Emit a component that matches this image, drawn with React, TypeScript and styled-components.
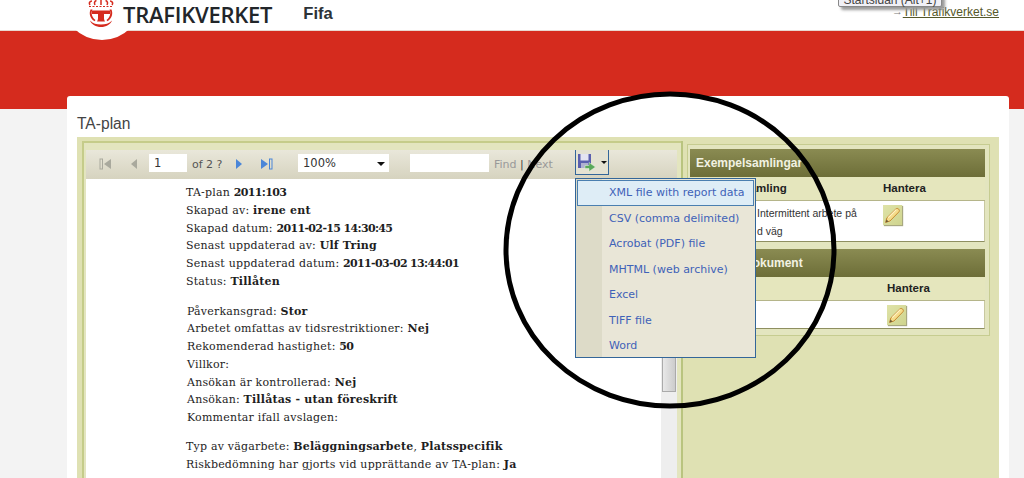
import React from "react";
import styled, { createGlobalStyle } from "styled-components";

const Global = createGlobalStyle`
  html, body { margin: 0; padding: 0; height: 478px; overflow: hidden; background: #f3f3f3; }
  #root { height: 478px; overflow: hidden; position: relative; }
`;
const Page = styled.div`position: relative; width: 1024px; height: 478px; overflow: hidden; font-family: "Liberation Sans", Arial, sans-serif;`;
const Header = styled.header`position: relative; height: 30px; background: #fff; border-bottom: 1px solid #e8d8d0; display: flex; align-items: center; padding-left: 123px;`;
const LogoBadge = styled.div`position: absolute; left: 62px; top: -40px; width: 80px; height: 80px; border-radius: 50%; background: #fff; z-index: 1;`;
const LogoMark = styled.svg`position: absolute; left: 87px; top: 0; width: 28px; height: 28px; z-index: 2;`;
const Brand = styled.span`position: relative; z-index: 2; flex: none; font: 600 22px "Open Sans", sans-serif; color: #22262a; margin-right: 31px; letter-spacing: -0.25px; margin-top: -3px; white-space: nowrap;`;
const AppName = styled.span`font: 700 16.6px "Liberation Sans", sans-serif; color: #2c3338; margin-top: -3px;`;
const TopLink = styled.a`margin-left: auto; margin-right: 25px; margin-top: -6px; font-size: 12px; color: #55582a; text-decoration: underline;`;
const LinkArrow = styled.span`font-size: 11px; color: #777; position: absolute; left: 892px; top: 5px;`;
const Tip = styled.div`position: absolute; left: 838px; top: -6px; width: 104px; height: 13px; background: #f0f0f6; border: 1px solid #888; border-radius: 2px; box-shadow: 3px 3px 3px #999; font-size: 12px; line-height: 11px; color: #444; text-align: center; z-index: 3; box-sizing: border-box;`;
const RedBand = styled.div`height: 78px; background: #d52b1e;`;
const Sheet = styled.main`margin: -13px 15px 0 67px; height: 400px; background: #fff; border-radius: 3px 3px 0 0; padding: 10px 10px 0; box-sizing: border-box;`;
const Title = styled.h1`margin: 0; height: 31px; font: 400 15.6px/36px "Liberation Sans", sans-serif; color: #444;`;
const Frame = styled.div`display: flex; height: 360px; background: #dfe1b3; padding: 4px 9px 0 5px; box-sizing: border-box;`;
const LeftPane = styled.section`width: 599px; flex: none; border-left: 2px solid #c5cc8a; border-top: 2px solid #c5cc8a; padding: 7px 4px 0 2px; background: #e3e5bf; box-sizing: border-box;`;
const Toolbar = styled.div`height: 29px; background: linear-gradient(#e9e7da, #d6d3bf); display: flex; align-items: center; color: #666; font-size: 11.5px; position: relative;`;
const NavIcon = styled.svg<{ $x: number }>`width: 14px; height: 14px; flex: none; margin-left: ${p => p.$x}px; margin-top: -2px;`;
const PageInput = styled.div`width: 38px; height: 18px; margin-left: 9px; background: #fff; font: 11.5px/18px "DejaVu Sans", sans-serif; color: #333; text-indent: 5px; flex: none; margin-top: -3px;`;
const PageCount = styled.span`margin-left: 5px; width: 28px; font: 11px "DejaVu Sans", sans-serif; flex: none; color: #555; white-space: nowrap; margin-top: -1px;`;
const Zoom = styled.div`width: 91px; height: 18px; margin-left: 25px; flex: none; background: #fff; font: 11.5px/18px "DejaVu Sans", sans-serif; color: #333; text-indent: 5px; position: relative; margin-top: -3px;`;
const Caret = styled.i`position: absolute; border-style: solid; border-width: 4px 4px 0; border-color: #111 transparent transparent; right: 4px; top: 8px;`;
const FindInput = styled.div`width: 79px; height: 18px; margin-left: 21px; background: #fff; flex: none; margin-top: -3px;`;
const FindLinks = styled.span`margin-left: 5px; font: 11px "DejaVu Sans", sans-serif; color: #999; white-space: nowrap; margin-top: -1px;`;
const Sep = styled.span`color: #444;`;
const ExportBtn = styled.div`position: absolute; left: 489px; top: 0; border: 1px solid #336699; border-top: none; background: #e4e2d2; display: flex; align-items: center; padding-left: 1px; box-sizing: border-box; width: 34px; height: 25px;`;
const BtnCaret = styled.i`border-style: solid; border-width: 3px 3px 0; border-color: #111 transparent transparent; margin-left: 4px;`;
const Report = styled.div`height: 320px; background: #fff; position: relative; padding: 5px 0 0 100px; box-sizing: border-box; font: 11px/17.75px "DejaVu Serif", serif; color: #1e1e1e;`;
const Block = styled.p<{ $i?: number; $mb?: number }>`margin: 0 0 ${p => p.$mb ?? 12}px ${p => p.$i ?? 0}px; white-space: nowrap; letter-spacing: 0.2px;`;
const Line = styled.span`display: block;`;
const Num = styled.b`letter-spacing: -0.65px;`;
const Track = styled.div`position: absolute; right: 0; top: 0; bottom: 0; width: 16px; background: #eee;`;
const Thumb = styled.div`position: absolute; left: 1px; top: 0; border: 1px solid #aaa; width: 12px; height: 211px; background: linear-gradient(90deg, #e8e8e8, #ccc);`;
const RightPane = styled.aside`flex: 1; border-left: 2px solid #b9c47f; padding: 3px 0 0 4px; box-sizing: border-box;`;
const Inner = styled.div`height: 192px; border: 1px solid #c6cc90; padding: 4px 4px 0 2px; box-sizing: border-box; background: #e3e5bf;`;
const Section = styled.div`margin-bottom: 7px;`;
const SecHead = styled.div`height: 28px; background: linear-gradient(#8a8b52, #6d6e38); color: #f2f2e2; font: 700 12px/28px "Liberation Sans", sans-serif; padding-left: 6px;`;
const SubRow = styled.div<{ $g: number }>`height: 23px; display: grid; grid-template-columns: ${p => p.$g}px 1fr; background: #e5e6bd; border-bottom: 1px solid #b5b58a; font: 700 11.5px/23px "Liberation Sans", sans-serif; color: #222; padding-left: 6px;`;
const DataRow = styled.div<{ $h: number; $g: number }>`height: ${p => p.$h}px; display: grid; grid-template-columns: ${p => p.$g}px 1fr; background: #fff; border-bottom: 1px solid #8e8f60; border-right: 1px solid #c8c8a0; font: 10.5px/17.5px "Liberation Sans", sans-serif; color: #333; box-sizing: content-box;`;
const RowText = styled.div`padding: 4px 0 0 67px; white-space: nowrap;`;
const EditBtn = styled.div`width: 19px; height: 20px; margin-top: 4px; background: linear-gradient(135deg, #dfe3a8, #cfd48e); box-shadow: 1px 1px 1px #a8a880; box-sizing: border-box; display: flex; align-items: center; justify-content: center;`;
const Menu = styled.div`position: absolute; left: 575px; top: 178px; width: 181px; height: 180px; background: linear-gradient(90deg, #dddbc8 26px, #e9e6d7 26px); border: 1px solid #336699; box-sizing: border-box; font: 11px/25px "DejaVu Sans", sans-serif; color: #3f62b8; padding: 1px; z-index: 4;`;
const MenuItem = styled.div<{ $on?: boolean }>`height: 25.5px; padding-left: ${p => (p.$on ? 31 : 32)}px; box-sizing: border-box; white-space: nowrap; ${p => p.$on ? "background:#deedf6;border:1px solid #4a7fb0;line-height:23.5px;" : ""}`;
const Circle = styled.svg`position: absolute; left: 495px; top: 85px; width: 350px; height: 330px; z-index: 5; pointer-events: none;`;

const Prev = ({ c, bar, right }: { c: string; bar?: boolean; right?: boolean }) => (
  <g fill={c} transform={right ? "translate(14 0) scale(-1 1)" : undefined}>
    {bar && <rect x="1" y="2" width="2.5" height="10" fill="none" stroke={c} strokeWidth="1" />}
    <path d={bar ? "M12 2v10L5 7z" : "M11 2v10L5 7z"} />
  </g>
);
const Pencil = () => (
  <svg width="17" height="17" viewBox="0 0 16 16">
    <path d="M1.5 14.5l1.2-4.3L11 2c1-1 2-.8 2.8 0s1 1.8 0 2.8l-8.2 8.4z" fill="#f5dc8a" stroke="#c4842c" strokeWidth="0.9" />
    <path d="M4 10l7.5-7.5" stroke="#fff4c8" strokeWidth="1.1" />
    <path d="M1.5 14.5l.8-2.8 2 2z" fill="#6b5a38" />
  </svg>
);

export default function App() {
  return (
    <Page>
      <Global />
      <Header>
        <LogoBadge />
        <LogoMark viewBox="0 0 28 28">
          <g fill="none" stroke="#d52b1e" strokeWidth="1.5">
            <path d="M3 5c-1.5-2 0-4 2-4M8 5c-1-2-.5-4 1.5-4.5M14 5V0M20 5c1-2 .5-4-1.500-4.500M25 5c1.500-2 0-4-2-4" />
            <path d="M2 6.500h24" strokeWidth="1" strokeDasharray="2 1.500" />
          </g>
          <g fill="#d52b1e">
            <path d="M5 10.500h18v3.500h-6v4.500c0 1 .4 2 1 3h-8c.6-1 1-2 1-3V14H5z" />
            <path d="M3.500 9.500h2c-1.300 2-1.500 7 3 10.500l-1 1.200C2.500 18 2 13 3.500 9.500zM24.500 9.500h-2c1.300 2 1.500 7-3 10.500l1 1.200c5-3.200 5.500-8.200 4-11.700z" />
            <path d="M3 20.500c3 3 6.500 4 11 4s8-1 11-4c-1.500 4-6 6.500-11 6.500S4.500 24.500 3 20.500z" />
          </g>
        </LogoMark>
        <Brand>TRAFIKVERKET</Brand>
        <AppName>Fifa</AppName>
        <LinkArrow>→</LinkArrow>
        <TopLink>Till Trafikverket.se</TopLink>
        <Tip>Startsidan (Alt+1)</Tip>
      </Header>
      <RedBand />
      <Sheet>
        <Title>TA-plan</Title>
        <Frame>
          <LeftPane>
            <Toolbar>
              <NavIcon $x={13} viewBox="0 0 14 14"><Prev c="#a9a99d" bar /></NavIcon>
              <NavIcon $x={13} viewBox="0 0 14 14"><Prev c="#a9a99d" /></NavIcon>
              <PageInput>1</PageInput>
              <PageCount>of 2 ?</PageCount>
              <NavIcon $x={13} viewBox="0 0 14 14"><Prev c="#4a86d8" right /></NavIcon>
              <NavIcon $x={12} viewBox="0 0 14 14"><Prev c="#4a86d8" bar right /></NavIcon>
              <Zoom>100%<Caret /></Zoom>
              <FindInput />
              <FindLinks>Find <Sep>|</Sep> Next</FindLinks>
              <ExportBtn>
                <svg width="20" height="19" viewBox="0 0 20 19">
                  <path d="M1 1h13v14H1z" fill="#5a5fae" />
                  <path d="M3.500 1h8v6.500h-8z" fill="#e4e4f2" />
                  <path d="M4 10h7v5H4z" fill="#b0b0d0" />
                  <path d="M8 12.500l4 .0V9.500l6.500 4.500-6.500 4.500v-3H8z" fill="#5aa85a" stroke="#e8f4e0" strokeWidth="0.5" />
                </svg>
                <BtnCaret />
              </ExportBtn>
            </Toolbar>
            <Report>
              <Block>
                <Line>TA-plan <Num>2011:103</Num></Line>
                <Line>Skapad av: <b>irene ent</b></Line>
                <Line>Skapad datum: <Num>2011-02-15 14:30:45</Num></Line>
                <Line>Senast uppdaterad av: <b>Ulf Tring</b></Line>
                <Line>Senast uppdaterad datum: <Num>2011-03-02 13:44:01</Num></Line>
                <Line>Status: <b>Tillåten</b></Line>
              </Block>
              <Block $i={1} $mb={11}>
                <Line>Påverkansgrad: <b>Stor</b></Line>
                <Line>Arbetet omfattas av tidsrestriktioner: <b>Nej</b></Line>
                <Line>Rekomenderad hastighet: <Num>50</Num></Line>
                <Line>Villkor:</Line>
                <Line>Ansökan är kontrollerad: <b>Nej</b></Line>
                <Line>Ansökan: <b>Tillåtas - utan föreskrift</b></Line>
                <Line>Kommentar ifall avslagen:</Line>
              </Block>
              <Block>
                <Line>Typ av vägarbete: <b>Beläggningsarbete</b>, <b>Platsspecifik</b></Line>
                <Line>Riskbedömning har gjorts vid upprättande av TA-plan: <b>Ja</b></Line>
              </Block>
              <Track><Thumb /></Track>
            </Report>
          </LeftPane>
          <RightPane>
            <Inner>
              <Section>
                <SecHead>Exempelsamlingar</SecHead>
                <SubRow $g={187}><span>Exempelsamling</span><span>Hantera</span></SubRow>
                <DataRow $h={40} $g={193}>
                  <RowText>Intermittent arbete på<br />d väg</RowText>
                  <EditBtn><Pencil /></EditBtn>
                </DataRow>
              </Section>
              <Section>
                <SecHead>Exempeldokument</SecHead>
                <SubRow $g={191}><span /><span>Hantera</span></SubRow>
                <DataRow $h={27} $g={197}>
                  <RowText />
                  <EditBtn><Pencil /></EditBtn>
                </DataRow>
              </Section>
            </Inner>
          </RightPane>
        </Frame>
      </Sheet>
      <Menu>
        <MenuItem $on>XML file with report data</MenuItem>
        <MenuItem>CSV (comma delimited)</MenuItem>
        <MenuItem>Acrobat (PDF) file</MenuItem>
        <MenuItem>MHTML (web archive)</MenuItem>
        <MenuItem>Excel</MenuItem>
        <MenuItem>TIFF file</MenuItem>
        <MenuItem>Word</MenuItem>
      </Menu>
      <Circle viewBox="0 0 350 330">
        <ellipse cx="175" cy="165" rx="164" ry="156" fill="none" stroke="#000" strokeWidth="5" />
      </Circle>
    </Page>
  );
}
